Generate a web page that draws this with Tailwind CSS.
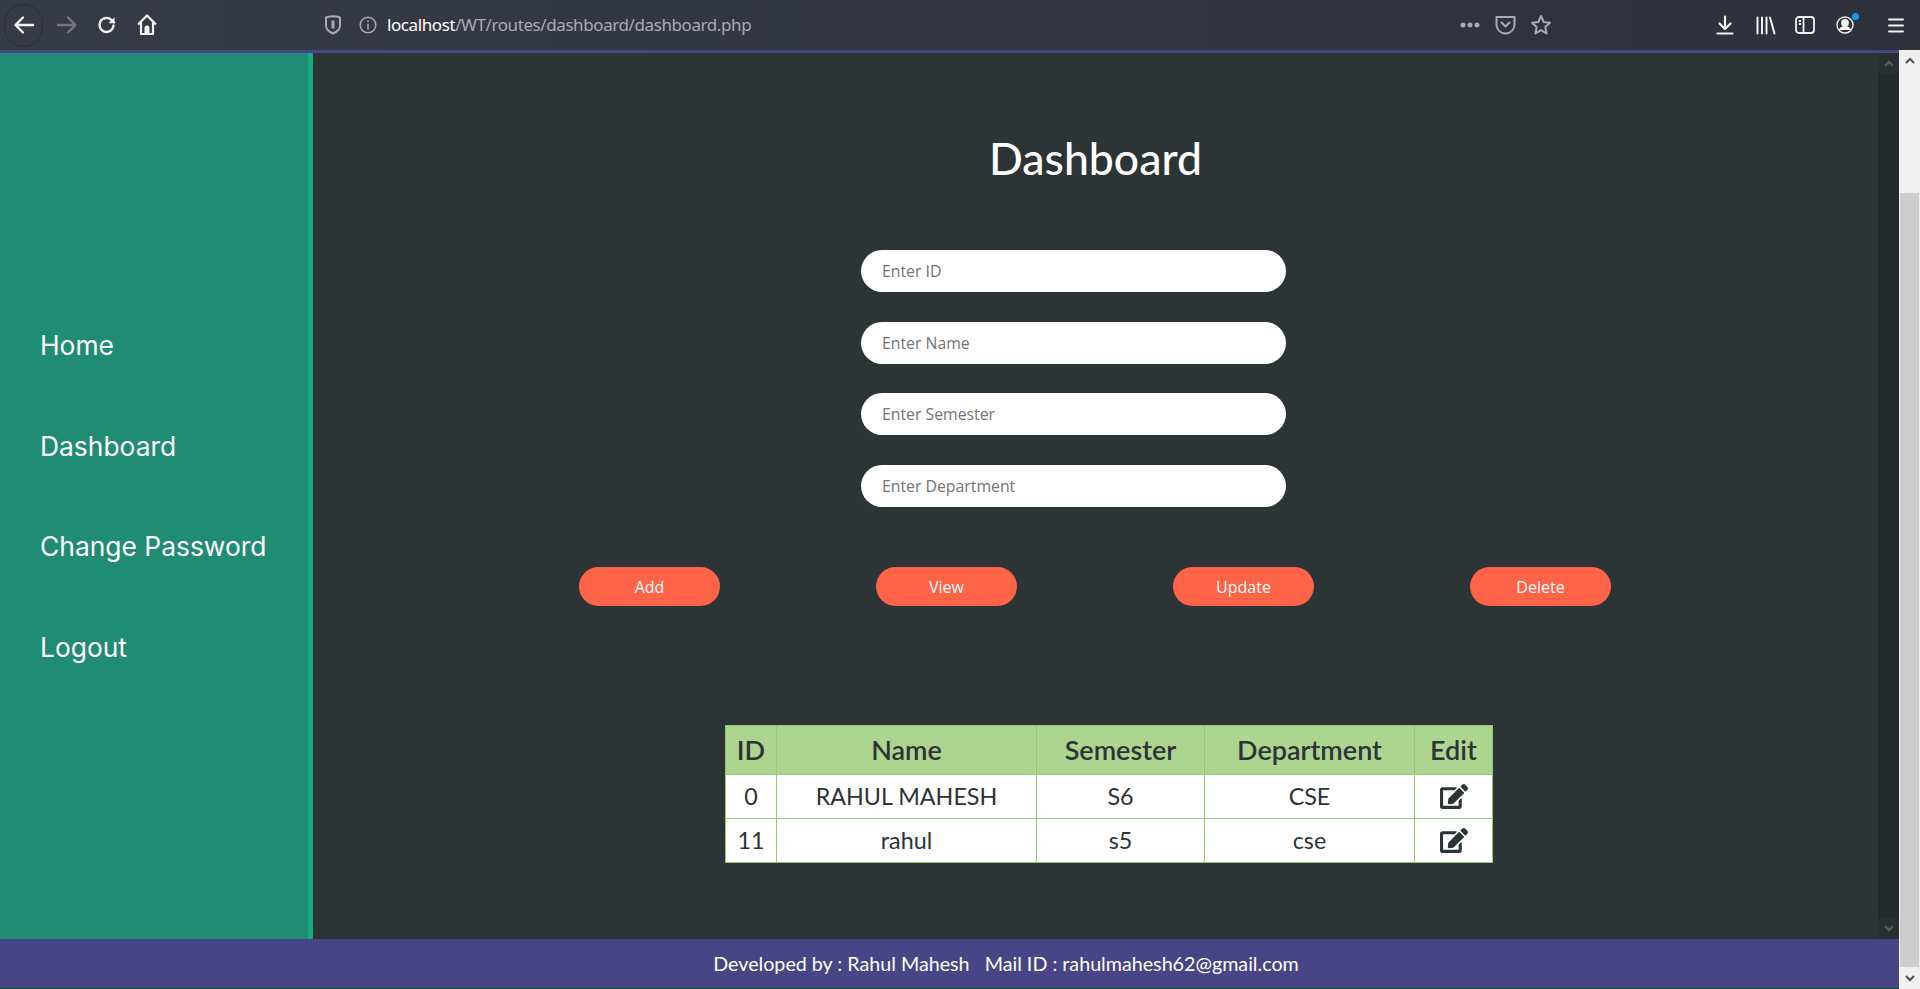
<!DOCTYPE html>
<html lang="en">
<head>
  <meta charset="UTF-8" />
  <title>Dashboard</title>
  <script src="https://cdn.jsdelivr.net/npm/@tailwindcss/browser@4"></script>
</head>
<body class="h-[989px] overflow-hidden flex flex-col bg-[#2d3436] font-['Lato',sans-serif]">

  <!-- browser toolbar -->
  <div class="h-[50px] shrink-0 flex items-center bg-gradient-to-r from-[#363b47] to-[#2e303c] text-white">
    <div class="w-[39px] h-[43px] ml-[4px] rounded-full border border-[#2b2f39] flex items-center justify-center">
      <svg class="w-[22px] h-[22px]" viewBox="0 0 22 22" fill="none" stroke="#f2f2f2" stroke-width="2.4" stroke-linecap="round" stroke-linejoin="round"><path d="M20 11H3M10 3.5 2.5 11l7.5 7.5"/></svg>
    </div>
    <svg class="w-[22px] h-[22px] ml-[13px]" viewBox="0 0 22 22" fill="none" stroke="#73767e" stroke-width="2.4" stroke-linecap="round" stroke-linejoin="round"><path d="M2 11h17M12 3.5l7.5 7.5-7.5 7.5"/></svg>
    <svg class="w-[20px] h-[20px] ml-[19px]" viewBox="0 0 20 20" fill="none" stroke="#f2f2f2" stroke-width="2.4" stroke-linecap="round"><path d="M16.5 10.5a7 7 0 1 1-2-5.5l2.5 2.5"/><path d="M17.5 2.2v6h-6" fill="#f2f2f2" stroke="none"/></svg>
    <svg class="w-[22px] h-[24px] ml-[19px]" viewBox="0 0 22 24" fill="none" stroke="#f2f2f2" stroke-width="2.2" stroke-linejoin="round"><path d="M2 11.500 11 2.500l9 9M5 9.500v11.500h12V9.500"/><path d="M8.500 21v-6a2.500 2.500 0 0 1 5 0v6z" fill="#f2f2f2" stroke="none"/></svg>

    <svg class="w-[20px] h-[22px] ml-[165px]" viewBox="0 0 20 22" fill="none" stroke="#a9abb0" stroke-width="2"><path d="M3 3.500c2.500-.8 4.500-1.300 7-1.300s4.500.5 7 1.300v8c0 4-3.500 6.500-7 8-3.500-1.500-7-4-7-8z" stroke-linejoin="round"/><path d="M10 6.500v8" stroke-width="3"/></svg>
    <svg class="w-[18px] h-[18px] ml-[16px]" viewBox="0 0 18 18" fill="none" stroke="#a9abb0" stroke-width="1.500"><circle cx="9" cy="9" r="7.800"/><path d="M9 8v5.500M9 4.500v1.800"/></svg>
    <div class="ml-[10px] text-[17px] tracking-[-0.41px] font-['Noto_Sans',sans-serif] text-[#a9abb0]"><span class="text-white">localhost</span>/WT/routes/dashboard/dashboard.php</div>

    <div class="ml-auto flex items-center">
      <svg class="w-[20px] h-[6px]" viewBox="0 0 20 6" fill="#a9abb0"><circle cx="3" cy="3" r="2.500"/><circle cx="10" cy="3" r="2.500"/><circle cx="17" cy="3" r="2.500"/></svg>
      <svg class="w-[21px] h-[20px] ml-[15px]" viewBox="0 0 21 20" fill="none" stroke="#a9abb0" stroke-width="2" stroke-linecap="round" stroke-linejoin="round"><path d="M1.500 2h18v7.500a9 9 0 0 1-18 0z"/><path d="m6.500 7.500 4 4 4-4"/></svg>
      <svg class="w-[22px] h-[22px] ml-[14px]" viewBox="0 0 22 22" fill="none" stroke="#a9abb0" stroke-width="2" stroke-linejoin="round"><path d="m11 2 2.700 6 6.300.7-4.700 4.300 1.300 6.500-5.600-3.300-5.600 3.300 1.300-6.500L2 8.700 8.300 8z"/></svg>
      <svg class="w-[18px] h-[20px] ml-[164px]" viewBox="0 0 18 20" fill="none" stroke="#f2f2f2" stroke-width="2.200" stroke-linecap="round" stroke-linejoin="round"><path d="M9 1.500v12M3.500 8.500 9 14l5.500-5.500"/><path d="M1.500 18.500h15"/></svg>
      <svg class="w-[20px] h-[19px] ml-[22px]" viewBox="0 0 20 19" fill="none" stroke="#f2f2f2" stroke-width="2" stroke-linecap="round"><path d="M1.500 1.500v16M6 1.500v16M10.500 1.500v16M14 1.500l4.500 16"/></svg>
      <svg class="w-[20px] h-[18px] ml-[19px]" viewBox="0 0 20 18" fill="none" stroke="#f2f2f2" stroke-width="1.800"><rect x="1" y="1" width="18" height="16" rx="3"/><path d="M8.500 1v16M3.800 5h2.200M3.800 8h2.200"/></svg>
      <div class="relative ml-[21px] w-[18px] h-[18px]">
        <svg class="w-[18px] h-[18px]" viewBox="0 0 18 18" fill="none" stroke="#f2f2f2" stroke-width="1.400"><circle cx="9" cy="9" r="8"/><circle cx="9" cy="7" r="3.200" fill="#f2f2f2"/><path d="M3.500 14c1-2.500 3-3 5.500-3s4.500.5 5.500 3" fill="#f2f2f2"/></svg>
        <div class="absolute -top-[3px] -right-[5px] w-[7px] h-[7px] rounded-full bg-[#0a9dfa]"></div>
      </div>
      <svg class="w-[16px] h-[15px] ml-[34px] mr-[16px]" viewBox="0 0 16 15" fill="none" stroke="#f2f2f2" stroke-width="2" stroke-linecap="round"><path d="M1 1.500h14M1 7.500h14M1 13.500h14"/></svg>
    </div>
  </div>

  <div class="flex-1 min-h-0 flex">
    <div class="flex-1 min-w-0 flex flex-col">
      <div class="h-[3px] shrink-0 bg-[#484586]"></div>

      <div class="flex-1 min-h-0 flex">
        <!-- sidebar -->
        <nav class="w-[313px] shrink-0 bg-[#218c74] border-r-[5px] border-[#10ac84] pt-[273px] pl-[40px] flex flex-col gap-[62px] font-['Inter',sans-serif] text-[26.400px] leading-[38.500px] text-white">
          <a>Home</a>
          <a>Dashboard</a>
          <a>Change Password</a>
          <a>Logout</a>
        </nav>

        <!-- main -->
        <main class="flex-1 min-w-0 pt-[80px]">
          <h1 class="text-center text-[44.500px] leading-[50px] font-medium text-white">Dashboard</h1>

          <form class="mt-[67px] ml-[548px] w-[425px] flex flex-col gap-[29.700px] font-['Open_Sans',sans-serif]">
            <input type="text" placeholder="Enter ID" class="h-[42px] rounded-[21px] bg-white px-[21px] text-[15.800px] outline-none placeholder:text-[#757575]" />
            <input type="text" placeholder="Enter Name" class="h-[42px] rounded-[21px] bg-white px-[21px] text-[15.800px] outline-none placeholder:text-[#757575]" />
            <input type="text" placeholder="Enter Semester" class="h-[42px] rounded-[21px] bg-white px-[21px] text-[15.800px] outline-none placeholder:text-[#757575]" />
            <input type="text" placeholder="Enter Department" class="h-[42px] rounded-[21px] bg-white px-[21px] text-[15.800px] outline-none placeholder:text-[#757575]" />
          </form>

          <div class="mt-[60px] ml-[266px] w-[1032px] flex justify-between font-['Open_Sans',sans-serif] text-[16px] text-white">
            <button class="w-[141px] h-[39px] rounded-[20px] bg-[#ff6348]">Add</button>
            <button class="w-[141px] h-[39px] rounded-[20px] bg-[#ff6348]">View</button>
            <button class="w-[141px] h-[39px] rounded-[20px] bg-[#ff6348]">Update</button>
            <button class="w-[141px] h-[39px] rounded-[20px] bg-[#ff6348]">Delete</button>
          </div>

          <table class="mt-[119px] ml-[412px] w-[767px] table-fixed border-collapse bg-white text-center text-[#2d3436] text-[23.300px]">
            <thead class="bg-[#aed590] text-[27px]">
              <tr class="h-[49px]">
                <th class="w-[51px] border border-[#98c96e] font-semibold">ID</th>
                <th class="w-[260px] border border-[#98c96e] font-semibold">Name</th>
                <th class="w-[168px] border border-[#98c96e] font-semibold">Semester</th>
                <th class="w-[210px] border border-[#98c96e] font-semibold">Department</th>
                <th class="w-[78px] border border-[#98c96e] font-semibold">Edit</th>
              </tr>
            </thead>
            <tbody>
              <tr class="h-[44px]">
                <td class="border border-[#98c96e]">0</td>
                <td class="border border-[#98c96e]">RAHUL MAHESH</td>
                <td class="border border-[#98c96e]">S6</td>
                <td class="border border-[#98c96e]">CSE</td>
                <td class="border border-[#98c96e]"><svg class="w-[28px] h-[25px] mx-auto" viewBox="0 0 576 512" fill="#2d3436"><path d="M402.600 83.200l90.200 90.200c3.800 3.800 3.800 10 0 13.800L274.400 405.600l-92.800 10.300c-12.400 1.400-22.900-9.100-21.500-21.500l10.300-92.800L388.800 83.200c3.800-3.800 10-3.800 13.800 0zm162-22.900l-48.800-48.800c-15.200-15.200-39.900-15.200-55.200 0l-35.400 35.400c-3.800 3.800-3.800 10 0 13.800l90.200 90.200c3.800 3.800 10 3.800 13.800 0l35.400-35.400c15.200-15.300 15.200-40 0-55.200zM384 346.200V448H64V128h229.800c3.200 0 6.200-1.300 8.500-3.500l40-40c7.600-7.600 2.200-20.500-8.500-20.500H48C21.500 64 0 85.500 0 112v352c0 26.500 21.500 48 48 48h352c26.500 0 48-21.500 48-48V306.200c0-10.700-12.900-16-20.500-8.500l-40 40c-2.200 2.300-3.500 5.300-3.500 8.500z"/></svg></td>
              </tr>
              <tr class="h-[44px]">
                <td class="border border-[#98c96e]">11</td>
                <td class="border border-[#98c96e]">rahul</td>
                <td class="border border-[#98c96e]">s5</td>
                <td class="border border-[#98c96e]">cse</td>
                <td class="border border-[#98c96e]"><svg class="w-[28px] h-[25px] mx-auto" viewBox="0 0 576 512" fill="#2d3436"><path d="M402.600 83.200l90.200 90.200c3.800 3.800 3.800 10 0 13.800L274.400 405.600l-92.800 10.300c-12.400 1.400-22.900-9.100-21.500-21.500l10.300-92.800L388.800 83.200c3.800-3.800 10-3.800 13.800 0zm162-22.900l-48.800-48.800c-15.200-15.200-39.900-15.200-55.200 0l-35.400 35.400c-3.800 3.800-3.800 10 0 13.800l90.200 90.200c3.800 3.800 10 3.800 13.800 0l35.400-35.400c15.200-15.300 15.200-40 0-55.200zM384 346.200V448H64V128h229.800c3.200 0 6.200-1.300 8.500-3.500l40-40c7.600-7.600 2.200-20.500-8.500-20.500H48C21.500 64 0 85.500 0 112v352c0 26.500 21.500 48 48 48h352c26.500 0 48-21.500 48-48V306.200c0-10.700-12.900-16-20.500-8.500l-40 40c-2.200 2.300-3.500 5.300-3.500 8.500z"/></svg></td>
              </tr>
            </tbody>
          </table>
        </main>

        <!-- inner scrollbar -->
        <div class="w-[21px] shrink-0 bg-[#24292b] flex flex-col justify-between">
          <div class="h-[21px] flex items-center justify-center bg-[#292e30]"><svg class="w-[10px] h-[7px]" viewBox="0 0 10 7" fill="none" stroke="#585c5e" stroke-width="2.400"><path d="m1 6 4-4 4 4"/></svg></div>
          <div class="h-[21px] flex items-center justify-center bg-[#292e30]"><svg class="w-[10px] h-[7px]" viewBox="0 0 10 7" fill="none" stroke="#585c5e" stroke-width="2.400"><path d="m1 1 4 4 4-4"/></svg></div>
        </div>
      </div>

      <footer class="h-[50px] shrink-0 pl-[113px] flex items-center justify-center bg-[#484586] border-b border-[#0c4a2a] text-[19.700px] text-white whitespace-pre">Developed by : Rahul Mahesh   Mail ID : rahulmahesh62@gmail.com</footer>
    </div>

    <!-- outer scrollbar -->
    <div class="w-[21px] shrink-0 bg-[#f0f0f0] flex flex-col">
      <div class="h-[21px] shrink-0 flex items-center justify-center"><svg class="w-[10px] h-[7px]" viewBox="0 0 10 7" fill="none" stroke="#505050" stroke-width="2"><path d="m1 6 4-4 4 4"/></svg></div>
      <div class="h-[122px] shrink-0"></div>
      <div class="h-[774px] shrink-0 mx-[1px] bg-[#cdcdcd]"></div>
      <div class="h-[22px] shrink-0 flex items-center justify-center"><svg class="w-[10px] h-[7px]" viewBox="0 0 10 7" fill="none" stroke="#505050" stroke-width="2"><path d="m1 1 4 4 4-4"/></svg></div>
    </div>
  </div>

</body>
</html>
